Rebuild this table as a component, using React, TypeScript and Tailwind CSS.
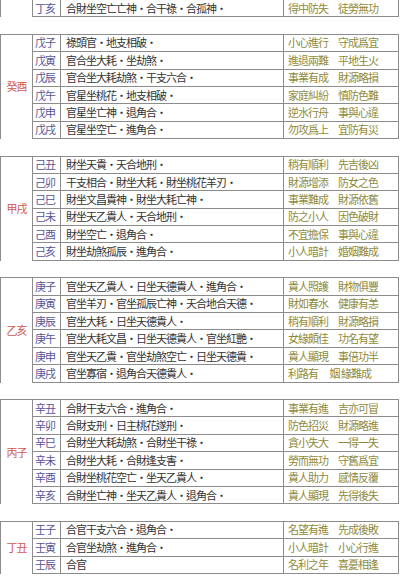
import React from "react";

type Row = [string, string, string];
type Group = { label: string; rows: Row[] };

const groups: Group[] = [
  { label: "", rows: [["丁亥", "合財坐空亡亡神・合干祿・合孤神・", "得中防失　徒勞無功"]] },
  {
    label: "癸酉",
    rows: [
      ["戊子", "祿頭官・地支相破・", "小心進行　守成爲宜"],
      ["戊寅", "官合坐大耗・坐劫煞・", "進退兩難　平地生火"],
      ["戊辰", "官合坐大耗劫煞・干支六合・", "事業有成　財源略損"],
      ["戊午", "官星坐桃花・地支相破・", "家庭糾紛　慎防色難"],
      ["戊申", "官星坐亡神・退角合・", "逆水行舟　事與心違"],
      ["戊戌", "官星坐空亡・進角合・", "勿攻爲上　宜防有災"],
    ],
  },
  {
    label: "甲戌",
    rows: [
      ["己丑", "財坐天貴・天合地刑・", "稍有順利　先吉後凶"],
      ["己卯", "干支相合・財坐大耗・財坐桃花羊刃・", "財源增添　防女之色"],
      ["己巳", "財坐文昌貴神・財坐大耗亡神・", "事業難成　財源依舊"],
      ["己未", "財坐天乙貴人・天合地刑・", "防之小人　因色破財"],
      ["己酉", "財坐空亡・退角合・", "不宜擔保　事與心違"],
      ["己亥", "財坐劫煞孤辰・進角合・", "小人暗計　婚姻難成"],
    ],
  },
  {
    label: "乙亥",
    rows: [
      ["庚子", "官坐天乙貴人・日坐天德貴人・進角合・", "貴人照護　財物俱豐"],
      ["庚寅", "官坐羊刃・官坐孤辰亡神・天合地合天德・", "財如春水　健康有恙"],
      ["庚辰", "官坐大耗・日坐天德貴人・", "稍有順利　財源略損"],
      ["庚午", "官坐大耗文昌・日坐天德貴人・官坐紅艷・", "女緣頗佳　功名有望"],
      ["庚申", "官坐天乙貴・官坐劫煞空亡・日坐天德貴・", "貴人顯現　事倍功半"],
      ["庚戌", "官坐寡宿・退角合天德貴人・", "利路有　 姻 緣難成"],
    ],
  },
  {
    label: "丙子",
    rows: [
      ["辛丑", "合財干支六合・進角合・", "事業有進　吉亦可冒"],
      ["辛卯", "合財支刑・日主桃花遂刑・", "防色招災　財源略進"],
      ["辛巳", "合財坐大耗劫煞・合財坐干祿・", "貪小失大　一得一失"],
      ["辛未", "合財坐大耗・合財逢支害・", "勞而無功　守舊爲宜"],
      ["辛酉", "合財坐桃花空亡・坐天乙貴人・", "貴人助力　感情反覆"],
      ["辛亥", "合財坐亡神・坐天乙貴人・退角合・", "貴人顯現　先得後失"],
    ],
  },
  {
    label: "丁丑",
    rows: [
      ["壬子", "合官干支六合・退角合・", "名望有進　先成後敗"],
      ["壬寅", "合官坐劫煞・進角合・", "小人暗計　小心行進"],
      ["壬辰", "合官", "名利之年　喜憂相逢"],
    ],
  },
];

function GroupBlock({ g, first }: { g: Group; first: boolean }) {
  return (
    <div
      className={
        "flex w-[399px] border-l border-r border-[#8c8c8c] " +
        (first ? "" : "border-t")
      }
    >
      <div className="w-[32px] shrink-0 border-r border-[#8c8c8c] flex items-center justify-center text-[#d0584f]">
        {g.label}
      </div>
      <div className="flex flex-col flex-1">
        {g.rows.map((r) => (
          <div key={r[0]} className="flex h-[17.4px] border-b border-[#8c8c8c] items-stretch">
            <div className="w-[28px] shrink-0 border-r border-[#8c8c8c] flex items-center pl-[2px] text-[#55559a]">
              {r[0]}
            </div>
            <div className="w-[223px] shrink-0 border-r border-[#8c8c8c] flex items-center pl-[5px] text-[#333333] whitespace-nowrap overflow-hidden">
              {r[1]}
            </div>
            <div className="flex-1 flex items-center pl-[4px] text-[#8e8a3c] whitespace-pre">
              {r[2]}
            </div>
          </div>
        ))}
      </div>
    </div>
  );
}

export default function App() {
  return (
    <div className="w-[400px] h-[576px] bg-white overflow-hidden font-['Noto_Sans_CJK_TC','Noto_Sans_CJK_SC',sans-serif] text-[11px] leading-none tracking-[-1px]">
      {groups.map((g, i) => (
        <React.Fragment key={i}>
          {i > 0 && <div className="h-[16.4px]" />}
          <GroupBlock g={g} first={i === 0} />
        </React.Fragment>
      ))}
    </div>
  );
}
